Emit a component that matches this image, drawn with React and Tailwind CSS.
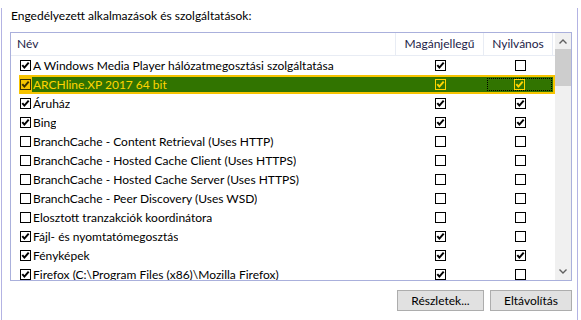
import React from 'react'

const rows = [
  { name: 'A Windows Media Player hálózatmegosztási szolgáltatása', on: true, priv: true, pub: false },
  { name: 'ARCHline.XP 2017 64 bit', on: true, priv: true, pub: true, selected: true },
  { name: 'Áruház', on: true, priv: true, pub: true },
  { name: 'Bing', on: true, priv: true, pub: true },
  { name: 'BranchCache - Content Retrieval (Uses HTTP)', on: false, priv: false, pub: false },
  { name: 'BranchCache - Hosted Cache Client (Uses HTTPS)', on: false, priv: false, pub: false },
  { name: 'BranchCache - Hosted Cache Server (Uses HTTPS)', on: false, priv: false, pub: false },
  { name: 'BranchCache - Peer Discovery (Uses WSD)', on: false, priv: false, pub: false },
  { name: 'Elosztott tranzakciók koordinátora', on: false, priv: false, pub: false },
  { name: 'Fájl- és nyomtatómegosztás', on: true, priv: true, pub: false },
  { name: 'Fényképek', on: true, priv: true, pub: true },
  { name: 'Firefox (C:\\Program Files (x86)\\Mozilla Firefox)', on: true, priv: true, pub: false },
]

const Check = ({ checked, stroke = '#000', fill = '#fff', mark = '#000' }) => (
  <svg width="11" height="11" viewBox="0 0 11 11" className="block shrink-0">
    <rect x="0.5" y="0.5" width="10" height="10" fill={fill} stroke={stroke} />
    {checked && <path d="M2.3 5.2 L4.4 7.6 L8.7 2.7" fill="none" stroke={mark} strokeWidth="2" />}
  </svg>
)

const Chevron = ({ up }) => (
  <svg width="8" height="5" viewBox="0 0 8 5" className="block">
    <path d={up ? 'M0.5 4.5 L4 1 L7.5 4.5' : 'M0.5 0.5 L4 4 L7.5 0.5'} fill="none" stroke="#606060" strokeWidth="1.4" />
  </svg>
)

const Row = ({ row }) => {
  if (row.selected) {
    return (
      <div className="flex h-[19px] pl-[8px]">
        <div className="flex flex-1 items-stretch bg-[#f7c400] py-[2px] pl-[1px] pr-[2px]">
          <div className="flex items-center">
            <Check checked stroke="#3a3000" fill="#f7c400" mark="#3a3000" />
          </div>
          <div className="ml-[1px] flex flex-1 items-center bg-[#317400] text-[#ffd400]">
            <div className="w-[364px] truncate pl-[1px]">{row.name}</div>
            <div className="flex w-[88px] justify-center">
              <Check checked={row.priv} stroke="#ffd400" fill="#317400" mark="#ffd400" />
            </div>
            <div className="flex h-full w-[69px] items-center p-[1px] pl-[3px]">
              <div className="flex h-full flex-1 items-center justify-center border border-dotted border-black">
                <Check checked={row.pub} stroke="#ffd400" fill="#317400" mark="#ffd400" />
              </div>
            </div>
          </div>
        </div>
      </div>
    )
  }
  return (
    <div className="flex h-[19px] items-center">
      <div className="flex w-[385px] items-center gap-[2px] pl-[9px]">
        <Check checked={row.on} />
        <span className="truncate">{row.name}</span>
      </div>
      <div className="flex w-[88px] justify-center">
        <Check checked={row.priv} />
      </div>
      <div className="flex w-[69px] justify-center pl-[3px]">
        <Check checked={row.pub} />
      </div>
    </div>
  )
}

const App = () => (
  <div className="h-[320px] w-[581px] overflow-hidden bg-white font-['Lato',sans-serif] text-[12px] text-black">
    <div className="ml-[1px] h-full w-[577px] border-x border-[#b3b3e3] px-[8px]">
      <div className="mt-[8px] h-[16px] pl-[1px] leading-[16px]">Engedélyezett alkalmazások és szolgáltatások:</div>
      <div className="mt-[8px] flex h-[249px] w-[562px] border border-[#aab0dc]">
        <div className="w-[544px] overflow-hidden">
          <div className="flex h-[23px] items-center border-b border-[#e8ecf4] text-[#1c1c48]">
            <div className="flex h-full w-[385px] items-center border-r border-[#e8ecf4] pl-[6px]">Név</div>
            <div className="flex h-full w-[88px] items-center justify-center border-r border-[#e8ecf4]">Magánjellegű</div>
            <div className="flex h-full w-[69px] items-center justify-center border-r border-[#e8ecf4]">Nyilvános</div>
          </div>
          {rows.map((row) => (
            <Row key={row.name} row={row} />
          ))}
        </div>
        <div className="flex w-[16px] flex-col bg-[#f0f0f0]">
          <div className="flex h-[16px] items-center justify-center">
            <Chevron up />
          </div>
          <div className="h-[37px] bg-[#cdcdcd]" />
          <div className="flex-1" />
          <div className="flex h-[17px] items-center justify-center">
            <Chevron />
          </div>
        </div>
      </div>
      <div className="mt-[9px] flex w-[562px] justify-end gap-[6px]">
        <button className="h-[21px] w-[87px] border border-[#adadad] bg-[#e1e1e1] text-[12px]">Részletek...</button>
        <button className="h-[21px] w-[82px] border border-[#adadad] bg-[#e1e1e1] text-[12px]">Eltávolítás</button>
      </div>
    </div>
  </div>
)

export default App
